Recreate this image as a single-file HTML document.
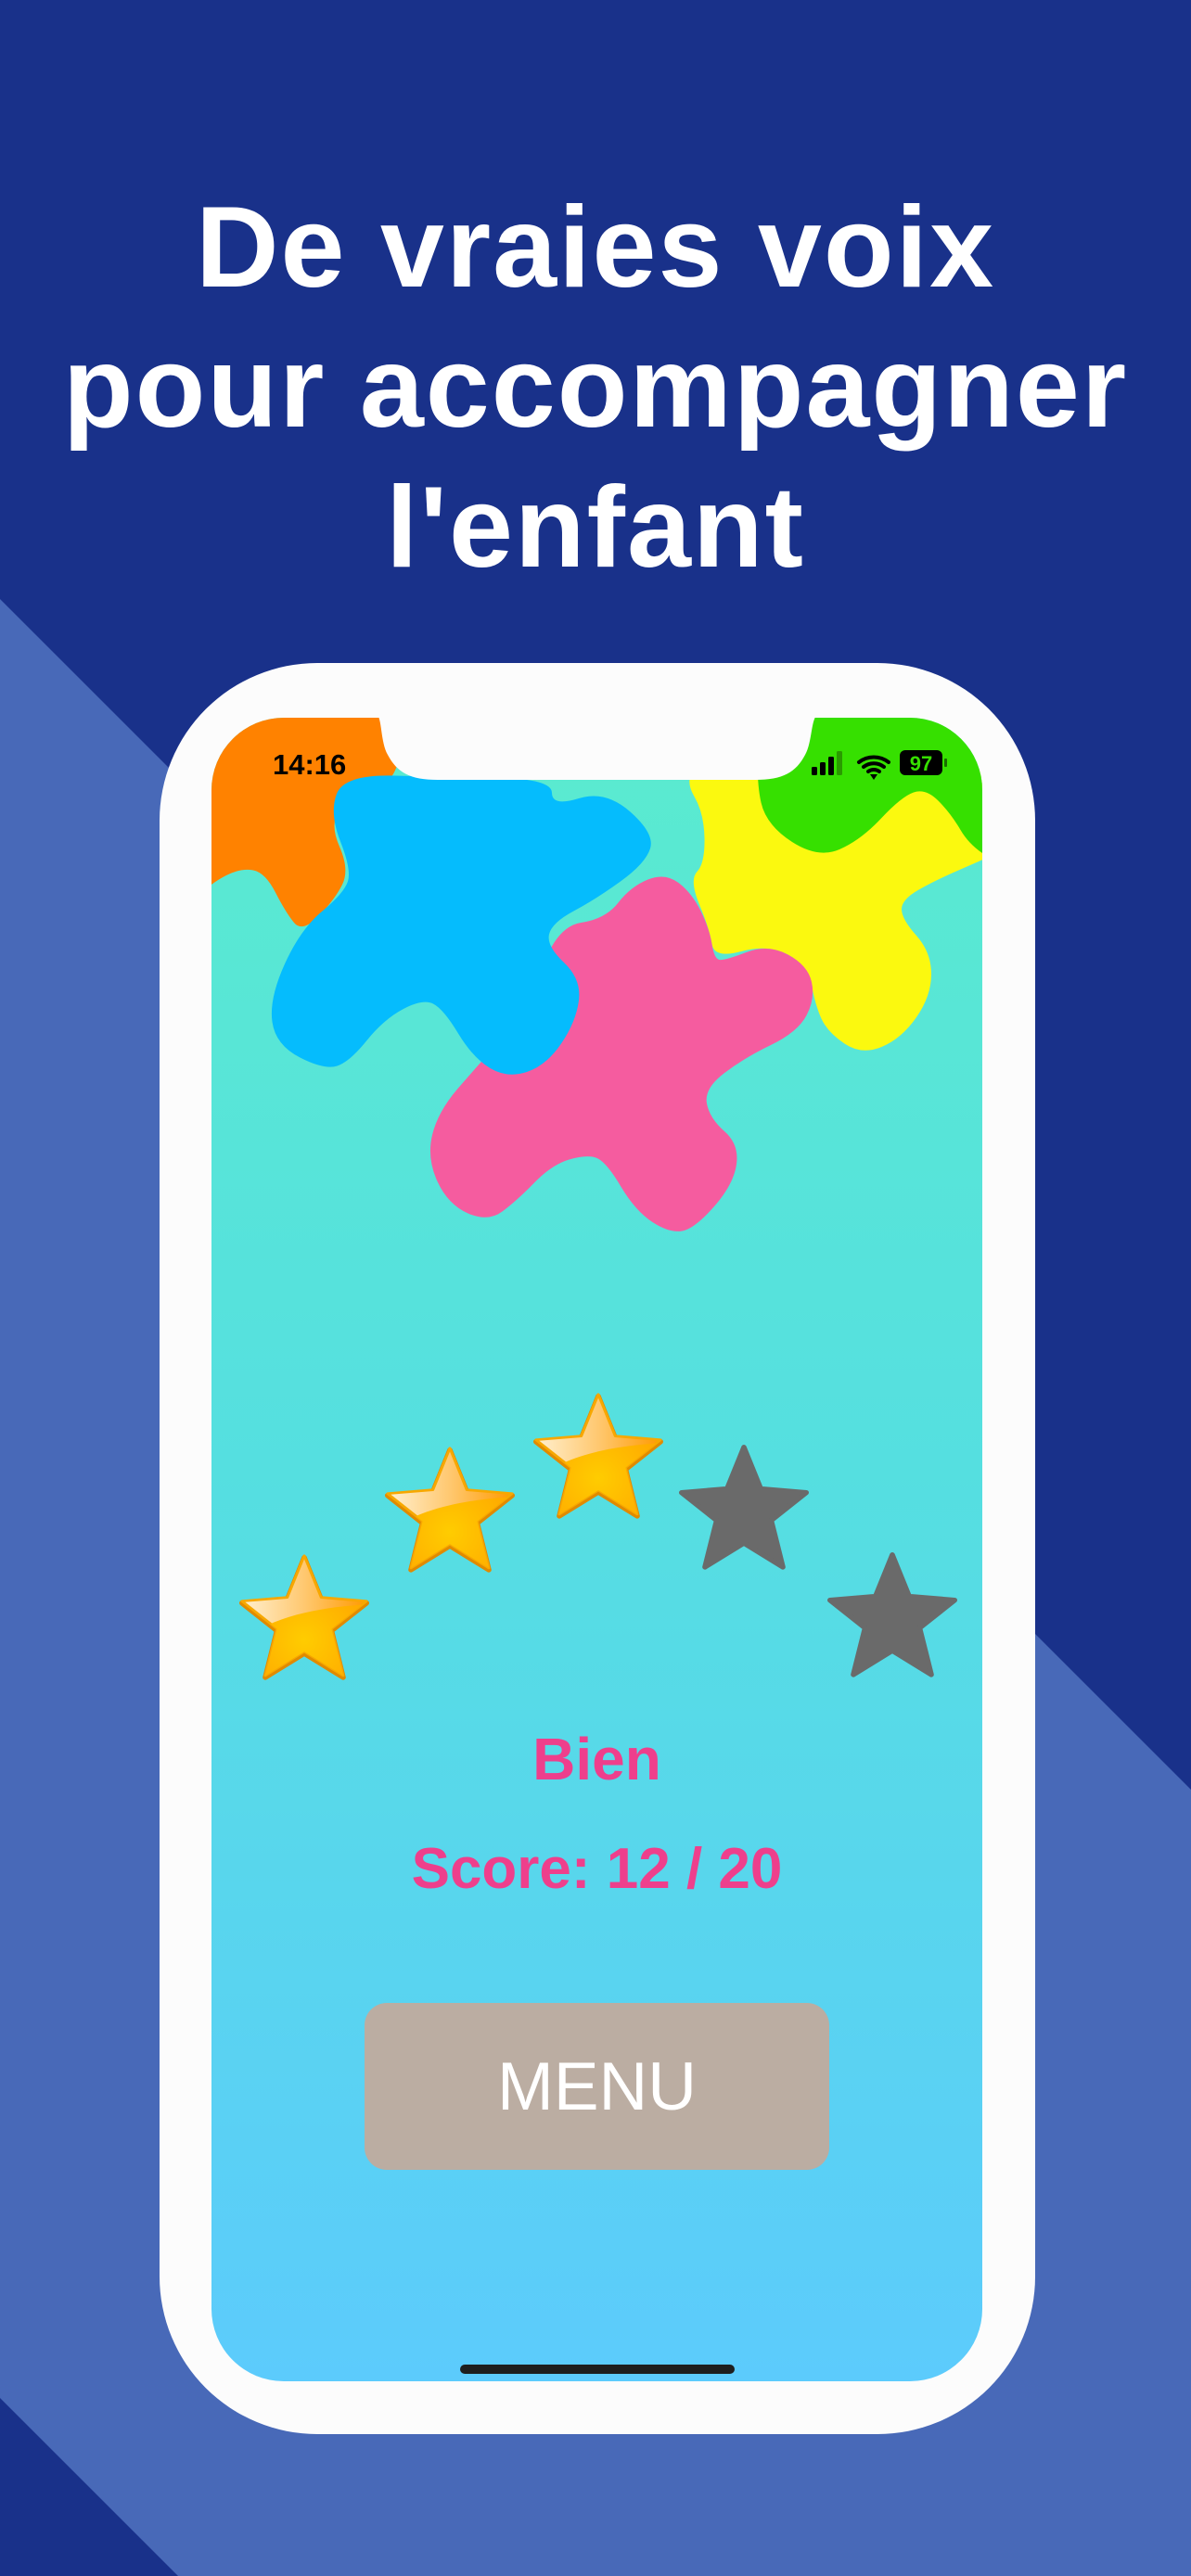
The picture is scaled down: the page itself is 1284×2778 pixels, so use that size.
<!DOCTYPE html>
<html><head><meta charset="utf-8"><style>
html,body{margin:0;padding:0}
body{width:1284px;height:2778px;position:relative;overflow:hidden;background:#19318a;font-family:"Liberation Sans",sans-serif}
.t{position:absolute;left:0;width:1284px;text-align:center;color:#fff;font-weight:bold;font-size:124px;line-height:151px;top:192px;letter-spacing:2px}
.abs{position:absolute}
</style></head><body>
<svg class="abs" style="left:0;top:0" width="1284" height="2778">
<polygon points="0,646 1284,1930 1284,2778 192,2778 0,2586" fill="#4869b8"/>
</svg>
<div class="t">De vraies voix<br>pour accompagner<br>l'enfant</div>
<div class="abs" style="left:172px;top:715px;width:944px;height:1910px;background:#fcfcfc;border-radius:170px"></div>
<svg class="abs" style="left:0;top:0" width="1284" height="2778" id="sv">
<defs>
<clipPath id="scr"><rect x="228" y="774" width="831" height="1794" rx="78"/></clipPath>
<linearGradient id="bg" x1="0" y1="0" x2="0" y2="1">
<stop offset="0" stop-color="#5aebcf"/><stop offset="0.45" stop-color="#55dfe0"/><stop offset="1" stop-color="#5ccbfc"/></linearGradient>
<linearGradient id="gold" x1="0" y1="0" x2="1" y2="0">
<stop offset="0" stop-color="#fff0d0"/><stop offset="0.5" stop-color="#ffc870"/><stop offset="1" stop-color="#ff9a00"/></linearGradient>
<radialGradient id="gold2" cx="0.5" cy="0.7" r="0.6">
<stop offset="0" stop-color="#ffcc00"/><stop offset="1" stop-color="#ffa500"/></radialGradient>
<path id="st" d="M50,2 L63,35 L98,38 L71,60 L80,97 L50,78 L20,97 L29,60 L2,38 L37,35 Z"/>
<clipPath id="low"><path d="M-10,100 L-10,78 C20,50 60,42 110,40 L110,100 Z"/></clipPath>
</defs>
<g clip-path="url(#scr)">
<rect x="228" y="774" width="831" height="1794" fill="url(#bg)"/>
<path id="orange" fill="#ff8200"/>
<path id="yellow" fill="#fbf90f"/>
<path id="green" fill="#36e000"/>
<path id="pink" fill="#f55c9f"/>
<path id="blue" fill="#05bcfd"/>
</g>
<path d="M395,770 L406,770 C412,774 410,800 418,814 C428,833 442,841 472,841 L814,841 C844,841 858,833 868,814 C876,800 874,774 882,770 Z" fill="#fcfcfc"/>
<g id="stars"></g>
<rect x="393" y="2160" width="501" height="180" rx="24" fill="#bbada2"/>
<rect x="496" y="2550" width="296" height="10" rx="5" fill="#1e1e1e"/>
<text x="294" y="835" font-family="Liberation Sans" font-weight="bold" font-size="31" fill="#000">14:16</text>
<rect x="875" y="827" width="6" height="9" rx="1.5" fill="#000"/>
<rect x="884" y="822" width="6" height="14" rx="1.5" fill="#000"/>
<rect x="893" y="816" width="6" height="20" rx="1.5" fill="#000"/>
<rect x="902" y="810" width="6" height="26" rx="1.5" fill="#2a9a00"/>
<path d="M926,822 A26,26 0 0 1 958,822 M931,827 A18,18 0 0 1 953,827 M936,832 A10,10 0 0 1 948,832" stroke="#000" stroke-width="4" fill="none" stroke-linecap="round"/>
<path d="M938,835 L946,835 L942,841 Z" fill="#000"/>
<rect x="970" y="809" width="46" height="27" rx="6" fill="#000"/>
<rect x="1018" y="818" width="3" height="9" rx="1" fill="#1a6a00"/>
<text x="993" y="831" text-anchor="middle" font-family="Liberation Sans" font-weight="bold" font-size="22" fill="#36e000">97</text>
</svg>
<div class="abs" style="left:228px;width:831px;top:1862px;text-align:center;color:#ee3f8c;font-weight:bold;font-size:64px;line-height:70px">Bien</div>
<div class="abs" style="left:228px;width:831px;top:1981px;text-align:center;color:#ee3f8c;font-weight:bold;font-size:62px;line-height:70px">Score: 12 / 20</div>
<div class="abs" style="left:393px;width:501px;top:2211px;text-align:center;color:#fff;font-size:73px;line-height:80px">MENU</div>
<script>
function sm(p){var n=p.length,d="";function m(a,b){return ((a[0]+b[0])/2).toFixed(1)+","+((a[1]+b[1])/2).toFixed(1)}
d="M"+m(p[n-1],p[0]);for(var i=0;i<n;i++){d+=" Q"+p[i][0]+","+p[i][1]+" "+m(p[i],p[(i+1)%n]);}return d+"Z";}
var B={
orange:[[190,760],[430,760],[432,841],[377,859],[355,888],[377,938],[361,970],[326,1006],[308,984],[286,941],[260,936],[228,952],[195,984]],
green:[[820,760],[815,841],[826,890],[882,926],[928,906],[972,859],[998,850],[1025,877],[1046,913],[1085,935],[1095,760]],
yellow:[[759,820],[738,841],[759,877],[760,931],[743,949],[765,1002],[770,1034],[828,1018],[871,1041],[879,1084],[892,1113],[929,1138],[972,1120],[1004,1074],[1004,1027],[972,991],[972,970],[1009,949],[1060,927],[1090,913],[1090,824],[919,824]],
pink:[[717,941],[746,963],[765,1002],[770,1034],[781,1036],[828,1018],[871,1041],[879,1077],[860,1113],[802,1141],[759,1174],[765,1206],[797,1234],[791,1277],[749,1325],[722,1330],[685,1306],[653,1252],[632,1245],[595,1256],[557,1295],[526,1318],[483,1299],[460,1249],[472,1199],[515,1149],[568,1091],[600,999],[653,991],[680,956]],
blue:[[371,835],[480,838],[595,840],[595,870],[653,852],[706,899],[696,931],[642,970],[595,995],[589,1020],[627,1056],[621,1102],[589,1149],[547,1163],[510,1141],[478,1088],[456,1077],[414,1099],[377,1145],[350,1154],[297,1127],[290,1077],[324,1002],[371,963],[379,938],[355,877]]};
for(var k in B)document.getElementById(k).setAttribute("d",sm(B[k]));
var S=[[258,1675,1],[415,1559,1],[575,1501,1],[732,1558,0],[892,1674,0]],g="";
S.forEach(function(s){var tr='transform="translate('+s[0]+','+s[1]+') scale(1.4,1.36)"';
if(s[2]){g+='<g '+tr+'><use href="#st" fill="#e08a00" stroke="#e08a00" stroke-width="4" stroke-linejoin="round" transform="translate(0,1.5)"/><use href="#st" fill="url(#gold)" stroke="#f7a800" stroke-width="2" stroke-linejoin="round"/><use href="#st" fill="url(#gold2)" clip-path="url(#low)"/></g>';}
else{g+='<g '+tr+'><use href="#st" fill="#6a6a6a" stroke="#6a6a6a" stroke-width="4" stroke-linejoin="round"/></g>';}});
document.getElementById("stars").innerHTML=g;
</script>
</body></html>
